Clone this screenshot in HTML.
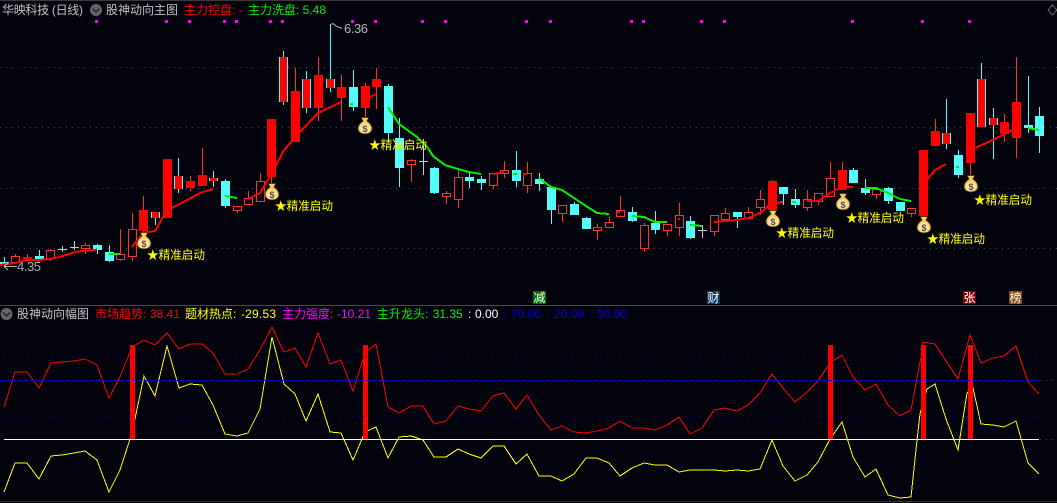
<!DOCTYPE html>
<html><head><meta charset="utf-8"><style>
html,body{margin:0;padding:0;background:#03030d;width:1057px;height:503px;overflow:hidden}
svg{display:block}
text{font-family:"Liberation Sans","WenQuanYi Zen Hei","Noto Sans CJK SC",sans-serif;font-size:12px}
</style></head><body>
<svg width="1057" height="503" viewBox="0 0 1057 503" xmlns="http://www.w3.org/2000/svg">
<rect width="1057" height="503" fill="#03030d"/>
<g shape-rendering="crispEdges">
<rect x="0" y="0" width="1057" height="1" fill="#3a3a3a"/>
<rect x="0" y="305" width="1057" height="1" fill="#4a4a4a"/>
<rect x="0" y="501" width="1057" height="1" fill="#333"/>
<path d="M0 67.5H1057M0 127.5H1057M0 188.5H1057M0 248.5H1057" stroke="#444" stroke-width="1" stroke-dasharray="1 5" fill="none"/>
<!-- magenta markers -->
<path fill="#ff00ff" d="M95 20h3v3h-3zM165 20h3v3h-3zM188 20h3v3h-3zM223 20h3v3h-3zM235 20h3v3h-3zM269 20h3v3h-3zM281 20h3v3h-3zM351 20h3v3h-3zM374 20h3v3h-3zM421 20h3v3h-3zM444 20h3v3h-3zM525 20h3v3h-3zM549 20h3v3h-3zM630 20h3v3h-3zM642 20h3v3h-3zM700 20h3v3h-3zM723 20h3v3h-3zM851 20h3v3h-3zM921 20h3v3h-3zM968 20h3v3h-3z"/>
<!-- red wicks -->
<path fill="none" stroke="#ff3232" stroke-width="1" d="M15.5 254V264M50.5 249V261M85.5 243V254M120.5 229V261M132.5 213V261M237.5 206V213M248.5 191V204M260.5 173V201M411.5 159V182M446.5 191V204M458.5 170V208M493.5 173V189M504.5 161V178M527.5 162V193M562.5 205V222M597.5 224V240M609.5 217V228M620.5 196V217M644.5 223V252M667.5 224V236M679.5 203V236M714.5 215V236M725.5 208V219M748.5 207V218M760.5 190V215M807.5 190V211M818.5 193V205M830.5 162V197M876.5 189V199M911.5 208V217M27.5 254V260M143.5 196V233M190.5 176V191M202.5 148V186M271.5 119V190M295.5 68V142M318.5 57V121M341.5 75V121M365.5 83V120M376.5 68V109M935.5 119V146M970.5 113V180M1004.5 114V142M1016.5 57V158M842.5 162V190M772.5 180V210"/>
<!-- cyan wicks -->
<path fill="none" stroke="#54fcfc" stroke-width="1" d="M155.5 212V225M178.5 158V193M213.5 171V187M283.5 51V105M306.5 71V113M330.5 24V92M946.5 99V149M981.5 63V127M993.5 108V159M4.5 257V265M39.5 250V260M97.5 244V254M109.5 245V262M225.5 179V208M353.5 70V111M388.5 84V140M399.5 118V187M434.5 167V194M469.5 173V188M481.5 176V190M516.5 151V187M539.5 173V191M551.5 187V224M574.5 202V215M586.5 217V229M632.5 207V222M655.5 211V234M690.5 216V239M737.5 212V228M783.5 187V205M795.5 189V208M853.5 168V183M865.5 179V195M888.5 187V204M900.5 202V211M958.5 150V178M1028.5 76V133M1039.5 107V153"/>
<!-- doji -->
<path fill="none" stroke="#cccccc" stroke-width="1" d="M62.5 246V252M58 249.5H67M74.5 241V250M70 247.5H79M423.5 145V175M419 161.5H428M702.5 225V238M698 230.5H707"/>
<!-- hollow bodies -->
<path fill="#03030d" stroke="#ff3232" stroke-width="1" d="M11.5 256.5h8v6h-8zM46.5 250.5h8v8h-8zM81.5 245.5h8v3h-8zM116.5 254.5h8v5h-8zM128.5 229.5h8v27h-8zM233.5 206.5h8v4h-8zM244.5 198.5h8v6h-8zM256.5 181.5h8v20h-8zM407.5 160.5h8v4h-8zM442.5 193.5h8v3h-8zM454.5 177.5h8v22h-8zM489.5 173.5h8v12h-8zM500.5 170.5h8v3h-8zM523.5 173.5h8v12h-8zM558.5 205.5h8v8h-8zM593.5 227.5h8v3h-8zM605.5 222.5h8v5h-8zM616.5 210.5h8v6h-8zM640.5 225.5h8v23h-8zM663.5 224.5h8v6h-8zM675.5 215.5h8v12h-8zM710.5 215.5h8v16h-8zM721.5 213.5h8v6h-8zM744.5 212.5h8v6h-8zM756.5 199.5h8v8h-8zM803.5 199.5h8v8h-8zM814.5 193.5h8v8h-8zM826.5 178.5h8v18h-8zM872.5 189.5h8v5h-8zM907.5 208.5h8v5h-8z"/>
<!-- cyan bodies -->
<path fill="#54fcfc" d="M0 262h9v2h-9zM35 256h9v4h-9zM93 245h9v5h-9zM105 252h9v9h-9zM221 181h9v25h-9zM349 87h9v20h-9zM384 86h9v47h-9zM395 138h9v30h-9zM430 168h9v25h-9zM465 177h9v4h-9zM477 179h9v4h-9zM512 170h9v11h-9zM535 179h9v5h-9zM547 187h9v23h-9zM570 204h9v11h-9zM582 218h9v11h-9zM628 212h9v9h-9zM651 223h9v7h-9zM686 221h9v17h-9zM733 212h9v5h-9zM779 187h9v7h-9zM791 199h9v6h-9zM849 170h9v13h-9zM861 188h9v5h-9zM884 188h9v13h-9zM896 202h9v9h-9zM954 155h9v20h-9zM1024 125h9v3h-9zM1035 116h9v20h-9zM151 212h9v6h-9zM174 176h9v13h-9zM209 178h9v3h-9zM279 57h9v45h-9zM302 79h9v29h-9zM326 79h9v9h-9zM942 133h9v11h-9zM977 79h9v48h-9zM989 118h9v7h-9z"/>
<!-- red bodies -->
<path fill="#ff0000" d="M23 257h9v2h-9zM139 210h9v21h-9zM163 159h9v59h-9zM186 181h9v7h-9zM198 175h9v11h-9zM267 119h9v58h-9zM291 91h9v51h-9zM314 75h9v33h-9zM337 87h9v11h-9zM361 86h9v22h-9zM372 79h9v8h-9zM919 150h9v66h-9zM931 131h9v15h-9zM966 113h9v50h-9zM1000 122h9v12h-9zM1012 102h9v36h-9zM838 170h9v20h-9zM768 181h9v29h-9zM152 212h7v6h-7zM175 176h7v13h-7zM210 178h7v3h-7zM280 57h7v45h-7zM303 79h7v29h-7zM327 79h7v9h-7zM943 133h7v11h-7zM978 79h7v48h-7zM990 118h7v7h-7z"/>
<!-- red MA segments -->
<g fill="none" stroke="#ff0000" stroke-width="2">
<polyline points="0,265 15,263 27,260 45,259.7 60,257 75,252 85,250.5 97,249.7"/>
<polyline points="132,247 143,233 155,231 163,217 170,209 187,200 200,193 213,189"/>
<polyline points="248,199 260,193 272,173 284,150 293,140 299,133 318,113 341,102"/>
<polyline points="365,97 370,97 376,94"/>
<polyline points="493,174 504,172"/>
<polyline points="523,174 527,174"/>
<polyline points="617,212 620,212"/>
<polyline points="678,219 680,219"/>
<polyline points="714,222 737,220 748,218 760,213 772,203 783,202"/>
<polyline points="807,201 818,201 830,193 842,187 853,187"/>
<polyline points="927,180 935,170 946,164"/>
<polyline points="975,148 993,140 1012,130"/>
</g>
<!-- green MA segments -->
<g fill="none" stroke="#00f000" stroke-width="2">
<polyline points="109,254 120,254"/>
<polyline points="225,196 237,198"/>
<polyline points="350,104.5 353,104"/>
<polyline points="388,107 399,124 417,137 428,148 433,156 445,165 458,169 469,172 481,174"/>
<polyline points="513,174 517,174"/>
<polyline points="539,178 551,187 562,190 574,198 586,206 597,213 609,214"/>
<polyline points="632,216 644,217 655,222 667,222"/>
<polyline points="690,225 702,226"/>
<polyline points="792,202 796,202"/>
<polyline points="865,188 876,188 888,193 900,199 911,201"/>
<polyline points="956,167 959,167"/>
<polyline points="1028,128 1039,130"/>
</g>
<!-- extremes -->
<path fill="none" stroke="#b4b4b4" stroke-width="1" d="M330.5 24.5L333 23.5L336 26L342 28.5M4 266.5H17M4 266.5L8 263M4 266.5L8 270"/>
<!-- diamond -->
<path fill="none" stroke="#666" stroke-width="1" d="M1052.5 5L1057 10L1052.5 15L1048 10Z"/>
<!-- tag boxes -->
<rect x="533" y="291" width="13" height="13" fill="#007000"/>
<rect x="707" y="291" width="13" height="13" fill="#0a3a6a"/>
<rect x="963" y="291" width="13" height="13" fill="#800000"/>
<rect x="1009" y="291" width="13" height="13" fill="#8a4a10"/>
<!-- lower panel curves -->
<polyline fill="none" stroke="#ff0000" stroke-width="1" points="4,407 15,372 27,372 39,388 51,363 62,362 74,361 85,359 97,365 109,398 120,377 132,347 144,340 155,345 167,333 179,349 190,344 202,344 213,353 225,374 237,374 248,369 260,350 272,327 284,352 295,348 306,367 318,333 330,364 341,360 353,391 365,353 376,344 388,407 399,413 411,406 423,406 434,424 446,421 458,406 469,409 481,411 493,396 504,393 516,409 527,395 539,415 551,430 562,426 574,432 586,433 597,431 609,428 620,421 632,428 644,428 655,430 667,425 679,417 690,434 702,428 714,410 725,408 737,411 748,405 760,393 772,374 783,388 795,402 807,392 818,381 830,363 842,355 853,377 865,390 876,384 888,405 900,416 911,410 921,357 923,342 935,344 946,361 958,379 970,335 981,363 993,358 1004,356 1016,346 1028,382 1039,394"/>
<polyline fill="none" stroke="#ffff00" stroke-width="1" points="4,492 15,463 27,463 39,479 51,456 62,455 74,453 85,451 97,460 109,492 120,470 132,433 144,376 155,396 167,346 179,388 190,384 202,385 213,405 225,434 237,436 248,433 260,409 272,337 284,384 295,394 306,421 318,394 330,432 341,433 353,460 365,432 376,427 388,458 399,437 411,436 423,440 434,457 446,457 458,449 469,454 481,458 493,446 504,446 516,464 527,454 539,476 551,476 562,481 574,474 586,458 597,458 609,463 620,476 632,468 644,463 655,465 667,465 679,472 690,470 702,470 714,470 725,471 737,470 748,471 760,469 772,440 783,466 795,481 807,475 818,462 830,439 842,422 853,457 865,477 876,469 888,495 900,498 911,497 917,440 920,414 927,389 935,384 946,419 958,450 967,393 973,388 981,424 993,425 1004,427 1016,421 1028,463 1039,474"/>
<!-- lower panel bars -->
<path fill="#ff0000" d="M130 345h5v94h-5zM363 345h5v94h-5zM828 345h5v94h-5zM921 345h5v94h-5zM968 345h5v94h-5z"/>
<rect x="4" y="439" width="1035" height="1" fill="#ffffff"/>
<!-- lower panel guides -->
<path fill="none" stroke="#0000e0" stroke-width="1" stroke-dasharray="1 10.6" d="M4 357.5H1040M4 416.5H1040"/>
<path fill="none" stroke="#0000f0" stroke-width="1" stroke-dasharray="4 2" d="M0 380.5H1040"/>
<path fill="none" stroke="#444" stroke-width="1" stroke-dasharray="1 5" d="M1040 380.5H1057M1040 439.5H1057"/>
</g>
<!-- money bags -->
<g transform="translate(144,241)"><path d="M-4-8.5L4-8.5L2-5C5-3 7-0.5 7 2.5C7 6 4 8 0 8C-4 8-7 6-7 2.5C-7-0.5-5-3-2-5Z" fill="#f2d060" stroke="#3c2408" stroke-width="0.8"/><ellipse cx="0" cy="2.5" rx="5" ry="4.6" fill="#f4e6b8"/><text x="0" y="6" text-anchor="middle" fill="#6a4020" style="font-size:9px;font-weight:bold">$</text></g>
<g transform="translate(272,192)"><path d="M-4-8.5L4-8.5L2-5C5-3 7-0.5 7 2.5C7 6 4 8 0 8C-4 8-7 6-7 2.5C-7-0.5-5-3-2-5Z" fill="#f2d060" stroke="#3c2408" stroke-width="0.8"/><ellipse cx="0" cy="2.5" rx="5" ry="4.6" fill="#f4e6b8"/><text x="0" y="6" text-anchor="middle" fill="#6a4020" style="font-size:9px;font-weight:bold">$</text></g>
<g transform="translate(365,126)"><path d="M-4-8.5L4-8.5L2-5C5-3 7-0.5 7 2.5C7 6 4 8 0 8C-4 8-7 6-7 2.5C-7-0.5-5-3-2-5Z" fill="#f2d060" stroke="#3c2408" stroke-width="0.8"/><ellipse cx="0" cy="2.5" rx="5" ry="4.6" fill="#f4e6b8"/><text x="0" y="6" text-anchor="middle" fill="#6a4020" style="font-size:9px;font-weight:bold">$</text></g>
<g transform="translate(773,219)"><path d="M-4-8.5L4-8.5L2-5C5-3 7-0.5 7 2.5C7 6 4 8 0 8C-4 8-7 6-7 2.5C-7-0.5-5-3-2-5Z" fill="#f2d060" stroke="#3c2408" stroke-width="0.8"/><ellipse cx="0" cy="2.5" rx="5" ry="4.6" fill="#f4e6b8"/><text x="0" y="6" text-anchor="middle" fill="#6a4020" style="font-size:9px;font-weight:bold">$</text></g>
<g transform="translate(843,202)"><path d="M-4-8.5L4-8.5L2-5C5-3 7-0.5 7 2.5C7 6 4 8 0 8C-4 8-7 6-7 2.5C-7-0.5-5-3-2-5Z" fill="#f2d060" stroke="#3c2408" stroke-width="0.8"/><ellipse cx="0" cy="2.5" rx="5" ry="4.6" fill="#f4e6b8"/><text x="0" y="6" text-anchor="middle" fill="#6a4020" style="font-size:9px;font-weight:bold">$</text></g>
<g transform="translate(924,225)"><path d="M-4-8.5L4-8.5L2-5C5-3 7-0.5 7 2.5C7 6 4 8 0 8C-4 8-7 6-7 2.5C-7-0.5-5-3-2-5Z" fill="#f2d060" stroke="#3c2408" stroke-width="0.8"/><ellipse cx="0" cy="2.5" rx="5" ry="4.6" fill="#f4e6b8"/><text x="0" y="6" text-anchor="middle" fill="#6a4020" style="font-size:9px;font-weight:bold">$</text></g>
<g transform="translate(971,184)"><path d="M-4-8.5L4-8.5L2-5C5-3 7-0.5 7 2.5C7 6 4 8 0 8C-4 8-7 6-7 2.5C-7-0.5-5-3-2-5Z" fill="#f2d060" stroke="#3c2408" stroke-width="0.8"/><ellipse cx="0" cy="2.5" rx="5" ry="4.6" fill="#f4e6b8"/><text x="0" y="6" text-anchor="middle" fill="#6a4020" style="font-size:9px;font-weight:bold">$</text></g>
<!-- signal labels -->
<g fill="#ffff00">
<text x="147" y="259" textLength="58" lengthAdjust="spacingAndGlyphs">★精准启动</text>
<text x="275" y="210" textLength="58" lengthAdjust="spacingAndGlyphs">★精准启动</text>
<text x="369" y="149" textLength="58" lengthAdjust="spacingAndGlyphs">★精准启动</text>
<text x="776" y="237" textLength="58" lengthAdjust="spacingAndGlyphs">★精准启动</text>
<text x="846" y="222" textLength="58" lengthAdjust="spacingAndGlyphs">★精准启动</text>
<text x="927" y="243" textLength="58" lengthAdjust="spacingAndGlyphs">★精准启动</text>
<text x="974" y="204" textLength="58" lengthAdjust="spacingAndGlyphs">★精准启动</text>
</g>
<text x="344" y="33" fill="#b8b8b8" style="font-size:13px" textLength="24">6.36</text>
<text x="17" y="271" fill="#a8a8a8" style="font-size:13px" textLength="24">4.35</text>
<g fill="#ffffff">
<text x="533.5" y="302">减</text>
<text x="707.5" y="302">财</text>
<text x="963.5" y="302">张</text>
<text x="1009.5" y="302">榜</text>
</g>
<!-- top header -->
<text x="2" y="14" fill="#c4c4c4" textLength="81">华映科技 (日线)</text>
<circle cx="96" cy="10" r="6" fill="#666"/>
<path d="M92.5 8.5L96 12L99.5 8.5" fill="none" stroke="#222" stroke-width="1.5"/>
<text x="106" y="14" fill="#c4c4c4">股神动向主图</text>
<text x="184" y="14" fill="#ff0000">主力控盘: -</text>
<text x="248" y="14" fill="#00f000">主力洗盘: 5.48</text>
<!-- lower header -->
<circle cx="6.5" cy="314" r="6" fill="#666"/>
<path d="M3 312.5L6.5 316L10 312.5" fill="none" stroke="#222" stroke-width="1.5"/>
<text x="17" y="318" fill="#c4c4c4">股神动向幅图</text>
<text x="95" y="318" fill="#ff0000">市场趋势:</text>
<text x="150" y="318" fill="#ff0000">38.41</text>
<text x="185" y="318" fill="#ffff00">题材热点:</text>
<text x="241" y="318" fill="#ffff00" textLength="35">-29.53</text>
<text x="282" y="318" fill="#ff00ff">主力强度:</text>
<text x="337" y="318" fill="#ff00ff">-10.21</text>
<text x="377" y="318" fill="#00f000">主升龙头:</text>
<text x="432.7" y="318" fill="#00f000">31.35</text>
<text x="468" y="318" fill="#ffffff">:</text>
<text x="475" y="318" fill="#ffffff">0.00</text>
<text x="503" y="318" fill="#0000e0">:</text>
<text x="511" y="318" fill="#0000e0">70.00</text>
<text x="546.5" y="318" fill="#0000e0">:</text>
<text x="554" y="318" fill="#0000e0">20.00</text>
<text x="590" y="318" fill="#0000e0">:</text>
<text x="597" y="318" fill="#0000e0">50.00</text>
</svg>
</body></html>
